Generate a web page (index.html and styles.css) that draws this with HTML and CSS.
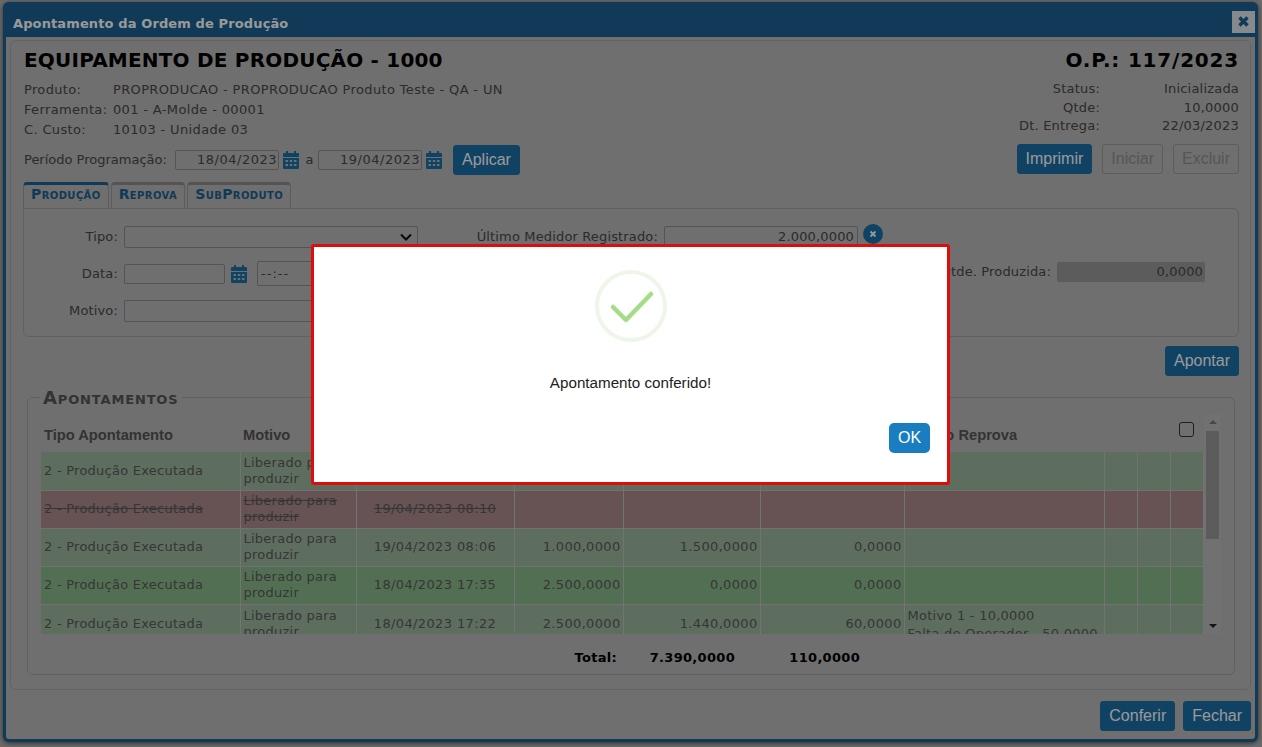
FILE: index.html
```html
<!DOCTYPE html>
<html lang="pt-BR">
<head>
<meta charset="utf-8">
<title>Apontamento da Ordem de Produção</title>
<link rel="stylesheet" href="styles.css">
</head>
<body>
<svg class="defs" width="0" height="0">
  <symbol id="cal" viewBox="0 0 16 18">
    <path fill="currentColor" d="M3 0h2v2h6V0h2v2h2a1 1 0 0 1 1 1v3H0V3a1 1 0 0 1 1-1h2zM0 7h16v10a1 1 0 0 1-1 1H1a1 1 0 0 1-1-1zm2.500 2v2h2.500V9zm4.300 0v2h2.500V9zm4.200 0v2h2.500V9zm-8.500 4v2h2.500v-2zm4.300 0v2h2.500v-2zm4.200 0v2h2.500v-2z"/>
  </symbol>
</svg>

<section class="dialog">
  <header class="titlebar">
    <span class="titlebar-text">Apontamento da Ordem de Produção</span>
    <button class="close" type="button" aria-label="Fechar">
      <svg width="13" height="13" viewBox="0 0 13 13"><path d="M2.500 2.500l8 8M10.500 2.500l-8 8" stroke="currentColor" stroke-width="3.400" fill="none"/></svg>
    </button>
  </header>

  <div class="panel">
    <div class="head">
      <div class="head-left">
        <h1 class="big big-left">EQUIPAMENTO DE PRODUÇÃO - 1000</h1>
        <div class="info-block">
          <div class="info"><span class="info-label">Produto:</span><span>PROPRODUCAO - PROPRODUCAO Produto Teste - QA - UN</span></div>
          <div class="info"><span class="info-label">Ferramenta:</span><span>001 - A-Molde - 00001</span></div>
          <div class="info"><span class="info-label">C. Custo:</span><span>10103 - Unidade 03</span></div>
        </div>
        <div class="period">
          <span class="period-label">Período Programação:</span>
          <span class="date-input">18/04/2023</span>
          <svg class="cal"><use href="#cal"/></svg>
          <span class="period-a">a</span>
          <span class="date-input">19/04/2023</span>
          <svg class="cal"><use href="#cal"/></svg>
          <button class="btn btn-apply" type="button">Aplicar</button>
        </div>
      </div>
      <div class="head-right">
        <h2 class="big big-right">O.P.: 117/2023</h2>
        <dl class="status">
          <dt>Status:</dt><dd>Inicializada</dd>
          <dt>Qtde:</dt><dd>10,0000</dd>
          <dt>Dt. Entrega:</dt><dd>22/03/2023</dd>
        </dl>
        <div class="head-actions">
          <button class="btn" type="button">Imprimir</button>
          <button class="btn btn-off" type="button">Iniciar</button>
          <button class="btn btn-off" type="button">Excluir</button>
        </div>
      </div>
    </div>

    <nav class="tabs">
      <span class="tab tab-on">Produção</span>
      <span class="tab">Reprova</span>
      <span class="tab">SubProduto</span>
    </nav>
    <div class="form">
      <div class="form-row">
        <label class="form-label">Tipo:</label>
        <span class="field field-type field-select">
          <svg width="12" height="8" viewBox="0 0 12 8"><path d="M1 1.500l5 5 5-5" fill="none" stroke="#111" stroke-width="2"/></svg>
        </span>
        <label class="form-label label-meter">Último Medidor Registrado:</label>
        <span class="field field-meter">2.000,0000</span>
        <span class="round-x"><svg width="8" height="8" viewBox="0 0 8 8"><path d="M1.500 1.500l5 5M6.500 1.500l-5 5" stroke="#fff" stroke-width="1.800"/></svg></span>
      </div>
      <div class="form-row">
        <label class="form-label">Data:</label>
        <span class="field field-date"></span>
        <svg class="cal cal-form"><use href="#cal"/></svg>
        <span class="field field-time">--:--</span>
        <label class="form-label label-qty">Qtde. Produzida:</label>
        <span class="field field-qty">0,0000</span>
      </div>
      <div class="form-row">
        <label class="form-label">Motivo:</label>
        <span class="field field-type field-reason"></span>
      </div>
    </div>

    <div class="apontar-row"><button class="btn" type="button">Apontar</button></div>

    <fieldset class="records">
      <legend>Apontamentos</legend>
      <div class="grid-wrap">
        <div class="grid-clip">
          <table class="grid">
            <colgroup>
              <col class="c1"><col class="c2"><col class="c3"><col class="c4"><col class="c5"><col class="c6"><col class="c7"><col class="c8"><col class="c8"><col class="c8">
            </colgroup>
            <thead>
              <tr>
                <th>Tipo Apontamento</th><th>Motivo</th><th>Data</th><th>Medidor</th><th>Qtde. Boa</th><th>Qtde. Ruim</th><th>Motivo Reprova</th>
                <th colspan="3" class="th-check"><span class="check"></span></th>
              </tr>
            </thead>
            <tbody>
              <tr class="ok"><td>2 - Produção Executada</td><td>Liberado para produzir</td><td class="mid">19/04/2023 08:12</td><td class="num">890,0000</td><td class="num">950,0000</td><td class="num">50,0000</td><td></td><td></td><td></td><td></td></tr>
              <tr class="bad"><td>2 - Produção Executada</td><td>Liberado para produzir</td><td class="mid">19/04/2023 08:10</td><td class="num"></td><td class="num"></td><td class="num"></td><td></td><td></td><td></td><td></td></tr>
              <tr class="ok"><td>2 - Produção Executada</td><td>Liberado para produzir</td><td class="mid">19/04/2023 08:06</td><td class="num">1.000,0000</td><td class="num">1.500,0000</td><td class="num">0,0000</td><td></td><td></td><td></td><td></td></tr>
              <tr class="strong"><td>2 - Produção Executada</td><td>Liberado para produzir</td><td class="mid">18/04/2023 17:35</td><td class="num">2.500,0000</td><td class="num">0,0000</td><td class="num">0,0000</td><td></td><td></td><td></td><td></td></tr>
              <tr class="ok"><td>2 - Produção Executada</td><td>Liberado para produzir</td><td class="mid">18/04/2023 17:22</td><td class="num">2.500,0000</td><td class="num">1.440,0000</td><td class="num">60,0000</td><td class="multi">Motivo 1 - 10,0000<br>Falta de Operador - 50,0000</td><td></td><td></td><td></td></tr>
            </tbody>
          </table>
        </div>
        <div class="scrollbar">
          <span class="arrow arrow-up"></span>
          <span class="thumb"></span>
          <span class="arrow arrow-down"></span>
        </div>
      </div>
      <div class="totals">
        <span class="total-label">Total:</span>
        <span class="total-a">7.390,0000</span>
        <span class="total-b">110,0000</span>
      </div>
    </fieldset>
  </div>

  <footer class="dialog-foot">
    <button class="btn" type="button">Conferir</button>
    <button class="btn" type="button">Fechar</button>
  </footer>
</section>

<div class="overlay"></div>

<div class="alert" role="dialog">
  <svg class="alert-icon" width="76" height="76" viewBox="0 0 76 76">
    <circle cx="38" cy="38" r="34" fill="none" stroke="#eef6ea" stroke-width="4"/>
    <path d="M20 39l13 13 25-26" fill="none" stroke="#a5dc86" stroke-width="4.500" stroke-linecap="round" stroke-linejoin="round"/>
  </svg>
  <p class="alert-text">Apontamento conferido!</p>
  <div class="alert-actions"><button class="alert-ok" type="button">OK</button></div>
</div>
</body>
</html>
```

FILE: styles.css
```css
* { box-sizing: border-box; }
html, body { margin: 0; height: 100%; }
body {
  background: #b2b2b2;
  font: 13px/16px "DejaVu Sans", Verdana, sans-serif;
  color: #484848;
  overflow: hidden;
}
.defs { position: absolute; }

.dialog {
  position: absolute;
  left: 3px;
  top: 2px;
  width: 1255px;
  height: 740px;
  border: 3px solid #1b6191;
  border-top: 0;
  border-radius: 6px;
  background: #b9b9b9;
  display: flex;
  flex-direction: column;
  box-shadow: 0 1px 5px rgba(0, 0, 0, .6);
}
.titlebar {
  height: 35px;
  margin: 0 -3px;
  padding: 0 3px 0 10px;
  background: #1b6191;
  border-radius: 6px 6px 0 0;
  display: flex;
  align-items: center;
  justify-content: space-between;
  flex: none;
}
.titlebar-text { color: #fff; font-weight: bold; font-size: 13px; letter-spacing: .12px; padding-top: 8px; }
.close {
  width: 23px;
  height: 22px;
  margin-top: 4px;
  padding: 0;
  border: 0;
  background: #dfe6ec;
  color: #1b6191;
  display: flex;
  align-items: center;
  justify-content: center;
}

.panel {
  margin: 3px 4px 0;
  height: 650px;
  flex: none;
  border: 1px solid #a6a6a6;
  border-radius: 6px;
  padding: 0 11px 0 12px;
}
.head { display: flex; justify-content: space-between; height: 134px; }
.big {
  margin: 0;
  height: 38px;
  color: #000;
  font: bold 20px/38px "DejaVu Sans", Verdana, sans-serif;
}
.big-left { letter-spacing: .2px; }
.big-right { letter-spacing: .8px; }
.head-left { padding-left: 1px; }
.info-block { padding-top: 1px; }
.info { display: flex; height: 20px; line-height: 20px; letter-spacing: .35px; }
.info-label { width: 89px; flex: none; }
.period { display: flex; align-items: center; margin-top: 5px; height: 30px; }
.period-label { width: 151px; flex: none; }
.date-input {
  width: 104px;
  height: 20px;
  border: 1px solid #8c8c8c;
  border-radius: 2px;
  text-align: right;
  padding-right: 1px;
  line-height: 18px;
  letter-spacing: .5px;
}
.date-input + .cal { margin-left: 4px; }
.cal { width: 16px; height: 18px; color: #1c6ea5; flex: none; }
.period-a { width: 19px; padding-left: 2px; text-align: center; }
.btn {
  height: 30px;
  padding: 0 8px;
  border: 1px solid #1c6ea5;
  border-radius: 3px;
  background: #1c6ea5;
  color: #fff;
  font: 16px "Liberation Sans", Arial, sans-serif;
}
.btn-apply { margin-left: 11px; }
.btn-off { background: transparent; border-color: #999; color: #8f8f8f; }

.head-right { width: 400px; text-align: right; }
.status {
  display: grid;
  grid-template-columns: 1fr 139px;
  margin: 1px 0 0;
  line-height: 18.500px;
  letter-spacing: .2px;
}
.status dt, .status dd { margin: 0; }
.head-actions { display: flex; justify-content: flex-end; gap: 10px; margin-top: 8px; }

.tabs { display: flex; gap: 2px; height: 26px; margin-top: 7px; }
.tab {
  padding: 0 7px;
  border: 1px solid #9a9a9a;
  border-top: 3px solid #8d8d8d;
  border-bottom: 0;
  border-radius: 4px 4px 0 0;
  color: #1b6191;
  font-weight: bold;
  font-variant: small-caps;
  font-size: 14px;
  letter-spacing: .4px;
  line-height: 18px;
}
.tab-on { border-top-color: #1b6191; background: #b9b9b9; }

.form {
  height: 129px;
  border: 1px solid #a0a0a0;
  border-radius: 0 6px 6px 6px;
  padding-top: 9px;
  letter-spacing: .15px;
}
.form-row { display: flex; align-items: center; height: 37px; }
.form-label { width: 94px; flex: none; text-align: right; margin-right: 6px; }
.field {
  height: 20px;
  border: 1px solid #8c8c8c;
  border-radius: 2px;
  background: transparent;
  flex: none;
}
.field-type { width: 294px; height: 22px; }
.field-select { display: flex; align-items: center; justify-content: flex-end; padding-right: 5px; }
.field-reason { width: 294px; }
.label-meter { width: 240px; }
.field-meter { width: 194px; height: 22px; text-align: right; padding-right: 3px; line-height: 20px; }
.round-x {
  width: 20px;
  height: 20px;
  margin: -6px 0 0 5px;
  border-radius: 50%;
  background: #1c6ea5;
  display: flex;
  align-items: center;
  justify-content: center;
}
.field-date { width: 101px; }
.cal-form { margin-left: 6px; }
.field-time { width: 90px; height: 25px; margin-left: 10px; padding-left: 3px; line-height: 23px; letter-spacing: 1px; }
.label-qty { width: 140px; margin-left: auto; margin-bottom: 4px; }
.field-qty {
  width: 148px;
  margin-right: 33px;
  margin-bottom: 4px;
  border: 0;
  background: #9a9a9a;
  text-align: right;
  padding-right: 2px;
  line-height: 20px;
}

.apontar-row { display: flex; justify-content: flex-end; margin-top: 9px; }

.records {
  margin: 13px 4px 0;
  padding: 9px 13px 0;
  height: 286px;
  min-width: 0;
  border: 1px solid #a0a0a0;
  border-radius: 6px;
}
.records legend {
  padding: 2px 3px 0;
  margin-left: -1px;
  font: bold 18px/14px "DejaVu Sans", Verdana, sans-serif;
  font-variant: small-caps;
  letter-spacing: .85px;
  color: #555;
}
.grid-wrap { display: flex; height: 220px; }
.grid-clip { width: 1163px; overflow: hidden; flex: none; }
.grid { width: 1163px; table-layout: fixed; border-collapse: collapse; }
.c1 { width: 199px; }
.c2 { width: 116px; }
.c3 { width: 158px; }
.c4 { width: 109px; }
.c5 { width: 137px; }
.c6 { width: 144px; }
.c7 { width: 200px; }
.c8 { width: 33.300px; }
.grid th {
  height: 38px;
  padding: 4px 3px 0;
  text-align: left;
  font: bold 14.700px "Liberation Sans", Arial, sans-serif;
  color: #555;
  white-space: nowrap;
}
.grid th.th-check { padding: 0 10px 8px 0; text-align: right; vertical-align: middle; }
.check {
  display: inline-block;
  width: 15px;
  height: 15px;
  border: 1px solid #333;
  border-radius: 3px;
  vertical-align: middle;
}
.grid td {
  height: 38px;
  padding: 0 3px;
  border-right: 1px solid rgba(255, 255, 255, .1);
  border-bottom: 1px solid rgba(255, 255, 255, .05);
  color: #5a5a5a;
  line-height: 16px;
  letter-spacing: .25px;
  overflow: hidden;
}
.grid td.num { text-align: right; letter-spacing: .33px; padding-right: 2px; }
.grid td.mid { text-align: center; letter-spacing: .37px; }
.grid td.multi { line-height: 18px; padding-top: 2px; }
.ok { background: #9db79d; }
.strong { background: #8aba8a; }
.bad { background: #ac8a8a; }
.bad td { text-decoration: line-through; }

.scrollbar {
  width: 17px;
  margin-left: 0;
  background: #bdbdbd;
  position: relative;
  display: flex;
  flex-direction: column;
  align-items: center;
}
.thumb { width: 13px; height: 108px; background: #9a9a9a; margin-top: 7px; }
.arrow { width: 0; height: 0; border-left: 4px solid transparent; border-right: 4px solid transparent; margin-top: 6px; }
.arrow-up { border-bottom: 4px solid #777; }
.arrow-down { border-top: 4px solid #222; margin-top: 85px; }

.totals {
  display: flex;
  height: 41px;
  align-items: center;
  padding-top: 7px;
  color: #000;
  font-weight: bold;
  letter-spacing: .3px;
}
.total-label { width: 576px; text-align: right; }
.total-a { width: 118px; text-align: right; }
.total-b { width: 125px; text-align: right; }

.dialog-foot { display: flex; justify-content: flex-end; gap: 8px; margin-top: 11px; padding-right: 4px; }

.overlay { position: absolute; inset: 0; background: rgba(0, 0, 0, .4); }

.alert {
  position: absolute;
  left: 311px;
  top: 244px;
  width: 639px;
  height: 241px;
  background: #fff;
  border: 3px solid #e00b0b;
  border-radius: 3px;
  display: flex;
  flex-direction: column;
  align-items: center;
  color: #222;
  font-family: "Liberation Sans", Arial, sans-serif;
}
.alert-icon { margin-top: 21px; flex: none; }
.alert-text { margin: 30px 0 0; font-size: 15.200px; line-height: 18px; }
.alert-actions { align-self: stretch; display: flex; justify-content: flex-end; padding-right: 17px; margin-top: 31px; }
.alert-ok {
  width: 41px;
  height: 30px;
  padding: 0;
  border: 0;
  border-radius: 5px;
  background: #197dc0;
  color: #fff;
  font: 16px "Liberation Sans", Arial, sans-serif;
}
```
